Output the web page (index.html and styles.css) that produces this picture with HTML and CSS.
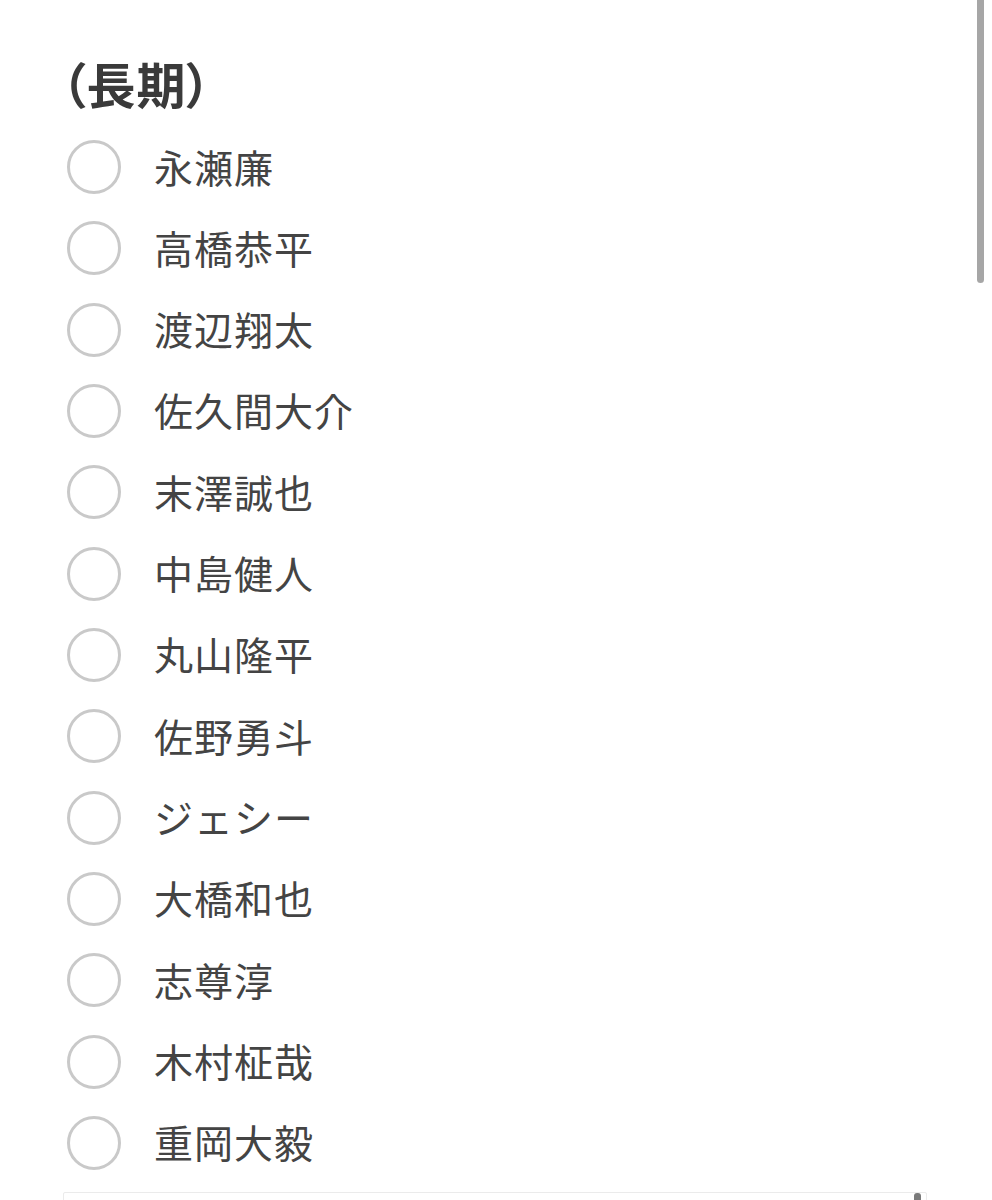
FILE: index.html
```html
<!DOCTYPE html>
<html lang="ja">
<head>
<meta charset="utf-8">
<link rel="stylesheet" href="styles.css">
</head>
<body>
<main class="page">
  <h2 class="title">（長期）</h2>
  <ul class="options">
    <li class="option"><span class="radio"></span><span class="label">永瀬廉</span></li>
    <li class="option"><span class="radio"></span><span class="label">高橋恭平</span></li>
    <li class="option"><span class="radio"></span><span class="label">渡辺翔太</span></li>
    <li class="option"><span class="radio"></span><span class="label">佐久間大介</span></li>
    <li class="option"><span class="radio"></span><span class="label">末澤誠也</span></li>
    <li class="option"><span class="radio"></span><span class="label">中島健人</span></li>
    <li class="option"><span class="radio"></span><span class="label">丸山隆平</span></li>
    <li class="option"><span class="radio"></span><span class="label">佐野勇斗</span></li>
    <li class="option"><span class="radio"></span><span class="label">ジェシー</span></li>
    <li class="option"><span class="radio"></span><span class="label">大橋和也</span></li>
    <li class="option"><span class="radio"></span><span class="label">志尊淳</span></li>
    <li class="option"><span class="radio"></span><span class="label">木村柾哉</span></li>
    <li class="option"><span class="radio"></span><span class="label">重岡大毅</span></li>
  </ul>
  <div class="textbox"><span class="handle"></span></div>
</main>
<div class="scrollbar"></div>
</body>
</html>
```

FILE: styles.css
```css
html, body {
  margin: 0;
  padding: 0;
  background: #ffffff;
  overflow: hidden;
}
body {
  font-family: "Noto Sans CJK JP", "Noto Sans", sans-serif;
  color: #444444;
}
.page {
  padding: 54px 65px 0 63px;
}
.title {
  margin: 0 0 0 -2px;
  font-size: 49px;
  line-height: 58px;
  font-weight: 700;
  color: #3a3a3a;
  font-feature-settings: "palt";
  letter-spacing: 1px;
}
.options {
  list-style: none;
  margin: 0;
  padding: 28px 0 0 4px;
  display: flex;
  flex-direction: column;
  gap: 27.33px;
}
.option {
  display: flex;
  align-items: center;
  height: 54px;
  gap: 33px;
}
.radio {
  box-sizing: border-box;
  width: 54px;
  height: 54px;
  border: 3px solid #c9c9c9;
  border-radius: 50%;
  flex: none;
}
.label {
  font-size: 39px;
  line-height: 1;
  letter-spacing: 1px;
  color: #444444;
  margin-top: -2px;
}
.textbox {
  position: relative;
  margin-top: 22px;
  height: 60px;
  border: 1px solid #ebebeb;
  border-radius: 2px;
}
.handle {
  position: absolute;
  top: 0;
  right: 5px;
  width: 7px;
  height: 8px;
  border-radius: 3px 3px 0 0;
  background: #7a7a7a;
}
.scrollbar {
  position: fixed;
  top: 0;
  left: 977px;
  width: 7px;
  height: 283px;
  border-radius: 0 0 4px 4px;
  background: #a6a6a6;
}
```
